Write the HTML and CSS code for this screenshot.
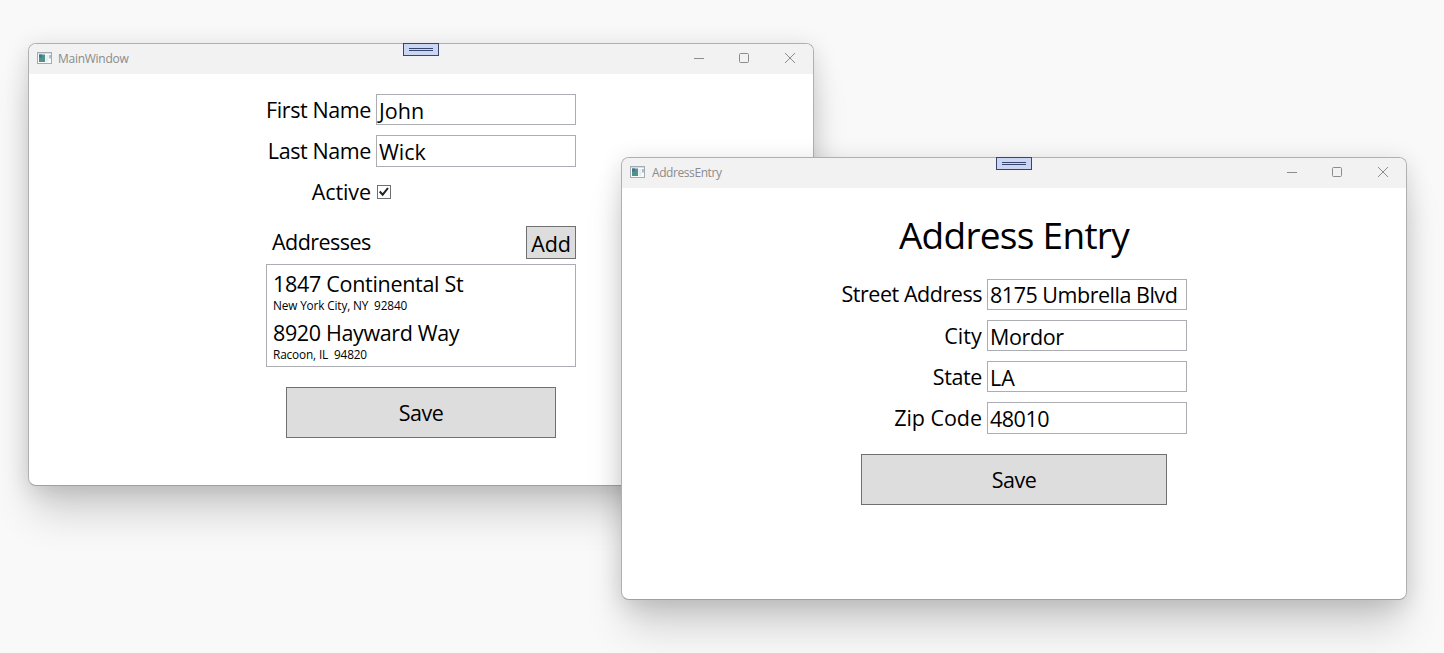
FILE: index.html
```html
<!DOCTYPE html>
<html lang="en">
<head>
<meta charset="utf-8">
<title>MainWindow</title>
<link rel="stylesheet" href="styles.css">
</head>
<body>
<main class="desktop">
  <section class="window window-main">
    <header class="titlebar">
      <svg class="app-icon" width="15" height="12" viewBox="0 0 15 12"><rect x=".5" y=".5" width="14" height="11" fill="#fbfcfd" stroke="#a4abb3"/><path d="M1 1.5h13" stroke="#d5dce2"/><rect x="2" y="2.5" width="6" height="7.5" fill="#4f9289"/><path d="M2 2.500h3v3H2z" fill="#496f95"/><rect x="8.500" y="3" width="3" height="7" fill="#e6eef0"/><path d="M13 3v3.500" stroke="#648195"/></svg>
      <span class="title title-main">MainWindow</span>
      <svg class="controls" width="102" height="12" viewBox="0 0 102 12" fill="none" stroke="#8c8c8c"><path d="M0 6.500h10"/><rect x="45.500" y="1.500" width="9" height="9" rx="1"/><path d="M91 1l10 10M101 1L91 11"/></svg>
      <span class="grip"></span>
    </header>
    <div class="form form-main">
      <div class="row"><label class="first">First Name</label><div class="input john">John</div></div>
      <div class="row"><label class="last">Last Name</label><div class="input tall wick">Wick</div></div>
      <div class="row row-active"><label class="active">Active</label><span class="checkbox"><svg width="14" height="14" viewBox="0 0 14 14"><path d="M2.700 6.500l3 3.200L11 3" fill="none" stroke="#212121" stroke-width="2"/></svg></span></div>
      <div class="list-head"><span class="addresses">Addresses</span><div class="button add">Add</div></div>
      <div class="list">
        <div class="street street-one">1847 Continental St</div>
        <div class="place place-one">New York City, NY&nbsp; 92840</div>
        <div class="street street-two">8920 Hayward Way</div>
        <div class="place place-two">Racoon, IL&nbsp; 94820</div>
      </div>
      <div class="button save">Save</div>
    </div>
  </section>
  <section class="window window-address">
    <header class="titlebar">
      <svg class="app-icon" width="15" height="12" viewBox="0 0 15 12"><rect x=".5" y=".5" width="14" height="11" fill="#fbfcfd" stroke="#a4abb3"/><path d="M1 1.5h13" stroke="#d5dce2"/><rect x="2" y="2.5" width="6" height="7.5" fill="#4f9289"/><path d="M2 2.500h3v3H2z" fill="#496f95"/><rect x="8.500" y="3" width="3" height="7" fill="#e6eef0"/><path d="M13 3v3.500" stroke="#648195"/></svg>
      <span class="title title-address">AddressEntry</span>
      <svg class="controls" width="102" height="12" viewBox="0 0 102 12" fill="none" stroke="#8c8c8c"><path d="M0 6.500h10"/><rect x="45.500" y="1.500" width="9" height="9" rx="1"/><path d="M91 1l10 10M101 1L91 11"/></svg>
      <span class="grip"></span>
    </header>
    <div class="form form-address">
      <h1>Address Entry</h1>
      <div class="row"><label class="street-label">Street Address</label><div class="input umbrella">8175 Umbrella Blvd</div></div>
      <div class="row"><label class="city">City</label><div class="input mordor">Mordor</div></div>
      <div class="row"><label class="state">State</label><div class="input la">LA</div></div>
      <div class="row"><label class="zip">Zip Code</label><div class="input tall digits">48010</div></div>
      <div class="button save">Save</div>
    </div>
  </section>
</main>
</body>
</html>
```
FILE: styles.css
```css
*, *::before { box-sizing: border-box; }
body { margin: 0; font-family: "Open Sans", "Noto Sans", sans-serif; color: #000; }
.desktop { position: relative; width: 1444px; height: 653px; overflow: hidden; background: #f9f9f9; }
.window {
  position: absolute; width: 786px; height: 443px;
  border: 1px solid #b0b0b0; border-bottom-color: #a0a0a0; border-radius: 8px; background: #fff;
  box-shadow: 0 32px 40px -6px rgba(0,0,0,.17), 0 4px 24px rgba(0,0,0,.14);
}
.window-main { left: 28px; top: 43px; }
.window-address { left: 621px; top: 157px; }
.titlebar {
  position: relative; display: flex; align-items: center; height: 30px;
  padding: 0 17px 0 8px; background: #f2f2f2; border-radius: 7px 7px 0 0;
}
.app-icon { margin-bottom: 2px; }
.title { margin-left: 6px; font-size: 12px; line-height: 28px; color: #8b8b8b; }
.title-main { letter-spacing: -.27px; }
.title-address { margin-left: 7px; letter-spacing: -.42px; }
.controls { margin-left: auto; margin-bottom: 2px; }
.grip {
  position: absolute; left: 374px; top: -1px; width: 36px; height: 13px;
  border: 1px solid #36456d; background: #cbd5f4;
}
.grip::before {
  content: ""; position: absolute; left: 5px; top: 4px; width: 24px; height: 3px;
  border: solid #36456d; border-width: 1px 0;
}
.form { display: flex; flex-direction: column; margin: 0 auto; font-size: 21.5px; }
.form-main { width: 310px; padding-top: 20px; }
.form-address { width: 346px; padding-top: 19px; }
.row { display: flex; justify-content: flex-end; height: 31px; margin-bottom: 10px; }
label { flex-shrink: 0; margin-right: 5px; line-height: 31px; white-space: nowrap; letter-spacing: -.4px; }
.active { letter-spacing: -.08px; }
.city { letter-spacing: .1px; }
.zip { letter-spacing: -.05px; }
.street-label { line-height: 30px; letter-spacing: -.45px; }
.input {
  flex-shrink: 0; width: 200px; height: 31px; padding-left: 2px; border: 1px solid #abadb3;
  line-height: 31px; background: #fff; white-space: nowrap;
}
.input.tall { height: 32px; }
.input.umbrella { line-height: 30px; letter-spacing: -.48px; }
.input.mordor { letter-spacing: -.38px; }
.input.digits { letter-spacing: -.5px; }
.checkbox {
  width: 14px; height: 14px; margin: 9px 185px 0 1px; border: 1px solid #707070;
  background: #fff;
}
.checkbox svg { display: block; margin: -1px; }
.list-head { display: flex; justify-content: space-between; height: 38px; margin-top: 9px; padding-left: 6px; }
.addresses { line-height: 32px; letter-spacing: -.55px; }
.button {
  border: 1px solid #707070; background: #ddd; text-align: center; letter-spacing: -.1px;
}
.button.add { width: 50px; height: 33px; line-height: 34px; }
.list { height: 103px; padding: 4px 7px 0 6px; border: 1px solid #abadb3; white-space: nowrap; }
.street { height: 29px; line-height: 29px; letter-spacing: -.3px; }
.street-two { letter-spacing: -.36px; }
.place { height: 20px; line-height: 15px; font-size: 11.8px; letter-spacing: -.14px; }
.button.save { height: 51px; margin: 20px 20px 0; line-height: 49px; letter-spacing: -.45px; }
.form-address .save { margin-top: 11px; }
h1 { margin: 0 0 17px; height: 55px; line-height: 55px; font-size: 37px; font-weight: 400; text-align: center; letter-spacing: -.72px; white-space: nowrap; }
```
